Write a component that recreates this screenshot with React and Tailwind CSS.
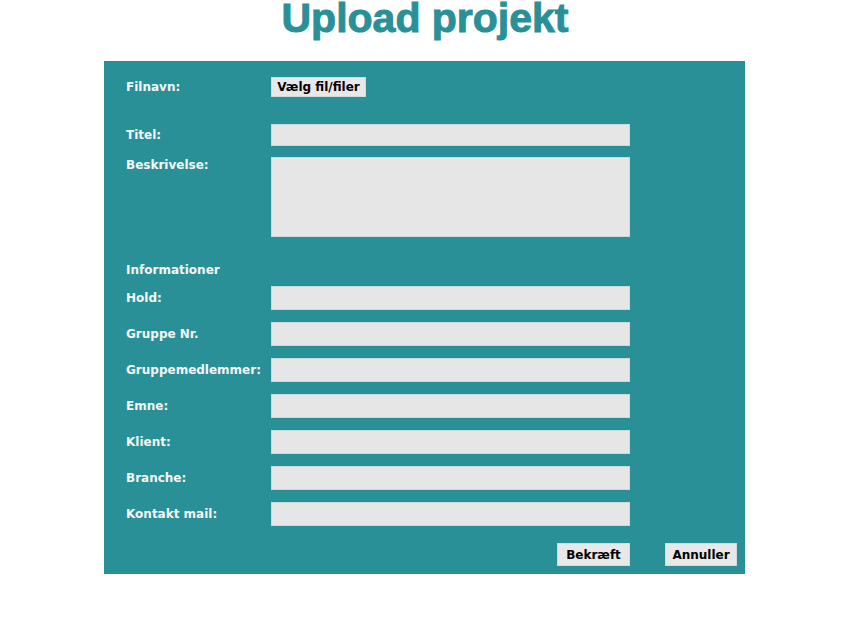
import React from "react";

const labelCls =
  "w-[145px] shrink-0 text-[12px] leading-4 font-bold text-[#f4f7f7] [font-family:'DejaVu_Sans',Verdana,sans-serif]";
const fieldCls =
  "w-[359px] bg-[#e6e6e6] border border-[#c8dcdd] outline-none";
const btnCls =
  "bg-[#e8e8e8] border border-[#cfdcdc] text-black text-[12px] font-bold leading-none [font-family:'DejaVu_Sans',Verdana,sans-serif] flex items-center justify-center";

const infoFields = [
  "Hold:",
  "Gruppe Nr.",
  "Gruppemedlemmer:",
  "Emne:",
  "Klient:",
  "Branche:",
  "Kontakt mail:",
];

function Row({ label, children, start }) {
  return (
    <div className={"flex " + (start ? "items-start" : "items-center")}>
      <span className={labelCls}>{label}</span>
      {children}
    </div>
  );
}

export default function App() {
  return (
    <div className="w-[850px] h-[640px] bg-white pt-[1px]">
      <h1 className="text-center text-[41px] leading-[34px] font-bold text-[#2a9098] [-webkit-text-stroke:1px_#2a9098] [font-family:'Liberation_Sans',Arial,sans-serif]">
        Upload projekt
      </h1>

      <form className="w-[641px] ml-[104px] mt-[26px] bg-[#2a9098] pt-[16px] pl-[22px] pr-[8px] pb-[8px] flex flex-col">
        <Row label="Filnavn:">
          <button type="button" className={btnCls + " w-[95px] h-[20px]"}>
            Vælg fil/filer
          </button>
        </Row>

        <div className="mt-[27px]">
          <Row label="Titel:">
            <input className={fieldCls + " h-[22px]"} />
          </Row>
        </div>

        <div className="mt-[11px]">
          <Row label="Beskrivelse:" start>
            <textarea className={fieldCls + " h-[80px] resize-none"} />
          </Row>
        </div>

        <div className={labelCls + " mt-[25px]"}>Informationer</div>

        <div className="mt-[8px] flex flex-col gap-[12px]">
          {infoFields.map((f) => (
            <Row key={f} label={f}>
              <input className={fieldCls + " h-[24px]"} />
            </Row>
          ))}
        </div>

        <div className="mt-[17px] flex justify-end gap-[35px]">
          <button type="button" className={btnCls + " w-[73px] h-[23px]"}>
            Bekræft
          </button>
          <button type="button" className={btnCls + " w-[72px] h-[23px]"}>
            Annuller
          </button>
        </div>
      </form>
    </div>
  );
}
